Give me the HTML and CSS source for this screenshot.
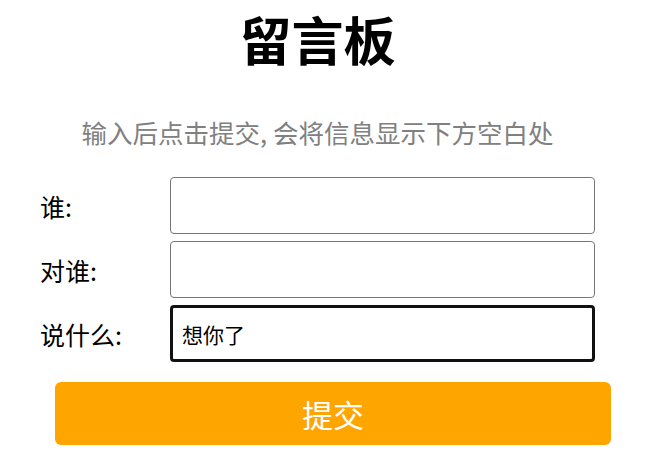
FILE: index.html
```html
<!DOCTYPE html>
<html lang="zh-CN">
<head>
    <meta charset="UTF-8">
    <meta name="viewport" content="width=device-width, initial-scale=1.0">
    <title>留言板</title>
    <link rel="stylesheet" href="styles.css">
</head>
<body>

<div class="container">
    <h1>留言板</h1>
    <p class="tip">输入后点击提交, 会将信息显示下方空白处</p>

    <!-- 表单 -->
    <div class="form">
        <label for="who">谁:</label>
        <input type="text" id="who">

        <label for="to">对谁:</label>
        <input type="text" id="to">

        <label for="msg">说什么:</label>
        <input type="text" id="msg" class="active" value="想你了">
    </div>

    <button class="submit">提交</button>

    <div id="list" class="list"></div>
</div>

</body>
</html>
```

FILE: styles.css
```css
body {
    font-family: "Noto Sans CJK SC", "Noto Sans", sans-serif;
    background-color: #FFFFFF;
    color: #000000;
    margin: 0;
}
.container {
    width: 555px;
    margin-left: 40px;
}
h1 {
    text-align: center;
    font-size: 52px;
    font-weight: bold;
    line-height: 60px;
    margin: 9px 0 0;
}
.tip {
    text-align: center;
    font-size: 25.5px;
    line-height: 30px;
    color: #808080;
    margin: 48px 0 30px;
}
.form {
    display: grid;
    grid-template-columns: 130px 1fr;
    row-gap: 7px;
    align-items: center;
}
label {
    font-size: 25px;
}
input[type="text"] {
    height: 57px;
    padding: 0 10px;
    font-family: inherit;
    font-size: 21px;
    color: #000000;
    border: 1px solid #767676;
    border-radius: 4px;
    box-sizing: border-box;
    outline: none;
}
input.active {
    border: 3px solid #111111;
    padding-left: 9px;
}
.submit {
    display: block;
    width: 556px;
    height: 63px;
    margin: 20px 0 0 15px;
    font-family: inherit;
    font-size: 31px;
    color: white;
    background-color: #FFA500;
    border: none;
    border-radius: 6px;
    cursor: pointer;
}
```
